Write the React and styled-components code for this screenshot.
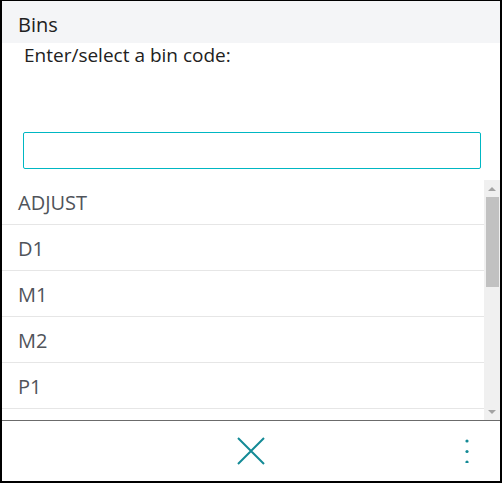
import styled, { createGlobalStyle } from "styled-components";

const GlobalStyle = createGlobalStyle`
  html, body {
    margin: 0;
    padding: 0;
    background: #fff;
  }
  body {
    font-family: "Open Sans", "Noto Sans", "Liberation Sans", sans-serif;
  }
`

const Frame = styled.div`
  box-sizing: border-box;
  width: 502px;
  height: 483px;
  border: 2px solid #000;
  border-top-width: 1px;
  display: flex;
  flex-direction: column;
  background: #fff;
  overflow: hidden;
`

const Header = styled.div`
  height: 42px;
  box-sizing: border-box;
  background: #f4f5f7;
  display: flex;
  align-items: center;
  padding: 5px 0 0 16px;
  font-size: 20px;
  color: #212121;
  flex-shrink: 0;
`

const Prompt = styled.div`
  height: 89px;
  padding: 0 0 0 22px;
  box-sizing: border-box;
  font-size: 19px;
  color: #212121;
  line-height: 24px;
  flex-shrink: 0;
`

const InputWrap = styled.div`
  padding: 0 19px 0 21px;
  flex-shrink: 0;
`

const Input = styled.input`
  box-sizing: border-box;
  display: block;
  width: 100%;
  height: 37px;
  border: 1px solid #00b7c3;
  border-radius: 2px;
  outline: none;
  padding: 0 8px;
  font: inherit;
  font-size: 18px;
`

const ListArea = styled.div`
  margin-top: 10px;
  height: 241px;
  display: flex;
  flex-shrink: 0;
`

const Rows = styled.div`
  flex: 1;
  overflow: hidden;
`

const Row = styled.div`
  height: 45px;
  border-bottom: 1px solid #e6e6e6;
  display: flex;
  align-items: center;
  padding: 2px 0 0 16px;
  box-sizing: content-box;
  height: 43px;
  font-size: 20px;
  color: #50545a;
`

const Track = styled.div`
  width: 16px;
  margin-top: 1px;
  background: #f0f0f0;
  display: flex;
  flex-direction: column;
  align-items: center;
`

const Arrow = styled.div`
  height: 17px;
  width: 100%;
  display: flex;
  align-items: center;
  justify-content: center;
  flex-shrink: 0;
  &::before {
    content: "";
    border-left: 4px solid transparent;
    border-right: 4px solid transparent;
    border-${p => (p.$down ? "top" : "bottom")}: 4px solid #a3a3a3;
  }
`

const Thumb = styled.div`
  width: 13px;
  height: 90px;
  background: #c1c1c1;
  flex-shrink: 0;
`

const Spacer = styled.div`
  flex: 1;
`

const Footer = styled.div`
  border-top: 1px solid #6b6b6b;
  height: 60px;
  display: grid;
  grid-template-columns: 1fr auto 1fr;
  align-items: center;
  flex-shrink: 0;
`

const IconButton = styled.button`
  background: none;
  border: none;
  padding: 0;
  display: flex;
  align-items: center;
  justify-content: center;
  cursor: pointer;
  color: #138a96;
  justify-self: ${p => p.$end ? "end" : "center"};
  margin-right: ${p => p.$end ? "21px" : "0"};
  width: ${p => p.$end ? "24px" : "auto"};
`

const bins = ["ADJUST", "D1", "M1", "M2", "P1"];

export default function App() {
  return (
    <>
      <GlobalStyle />
      <Frame>
        <Header>Bins</Header>
        <Prompt>Enter/select a bin code:</Prompt>
        <InputWrap>
          <Input type="text" />
        </InputWrap>
        <ListArea>
          <Rows>
            {bins.map(b => (
              <Row key={b}>{b}</Row>
            ))}
          </Rows>
          <Track>
            <Arrow />
            <Thumb />
            <Spacer />
            <Arrow $down />
          </Track>
        </ListArea>
        <Footer>
          <span />
          <IconButton aria-label="Close">
            <svg width="28" height="28" viewBox="0 0 28 28">
              <path d="M1 1 L27 27 M27 1 L1 27" stroke="currentColor" strokeWidth="2" fill="none" />
            </svg>
          </IconButton>
          <IconButton $end aria-label="More">
            <svg width="4" height="24" viewBox="0 0 4 24">
              <circle cx="2" cy="2" r="1.6" fill="currentColor" />
              <circle cx="2" cy="12.5" r="1.6" fill="currentColor" />
              <circle cx="2" cy="23" r="1.6" fill="currentColor" />
            </svg>
          </IconButton>
        </Footer>
      </Frame>
    </>
  );
}
